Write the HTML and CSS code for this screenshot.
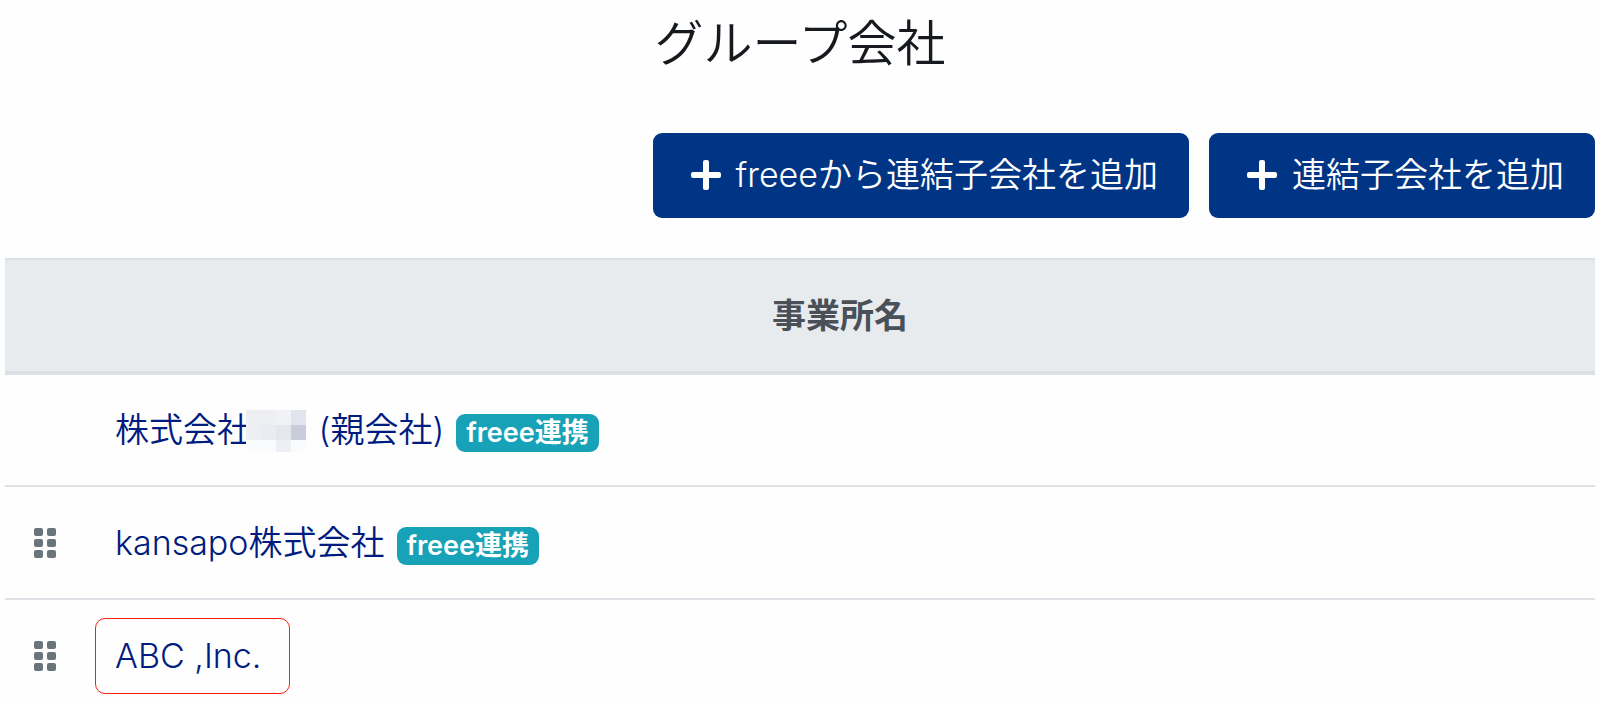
FILE: index.html
```html
<!DOCTYPE html>
<html lang="ja">
<head>
  <meta charset="UTF-8">
  <title>グループ会社</title>
  <link rel="stylesheet" href="styles.css">
</head>
<body>

  <h1>グループ会社</h1>

  <div class="actions">
    <button type="button" class="btn">
      <svg class="plus" viewBox="0 0 30 30" aria-hidden="true"><path d="M12 2a2 2 0 0 1 2-2h2a2 2 0 0 1 2 2v10h10a2 2 0 0 1 2 2v2a2 2 0 0 1-2 2H18v10a2 2 0 0 1-2 2h-2a2 2 0 0 1-2-2V18H2a2 2 0 0 1-2-2v-2a2 2 0 0 1 2-2h10z"/></svg>
      freeeから連結子会社を追加
    </button>
    <button type="button" class="btn">
      <svg class="plus" viewBox="0 0 30 30" aria-hidden="true"><path d="M12 2a2 2 0 0 1 2-2h2a2 2 0 0 1 2 2v10h10a2 2 0 0 1 2 2v2a2 2 0 0 1-2 2H18v10a2 2 0 0 1-2 2h-2a2 2 0 0 1-2-2V18H2a2 2 0 0 1-2-2v-2a2 2 0 0 1 2-2h10z"/></svg>
      連結子会社を追加
    </button>
  </div>

  <table class="companies">
    <thead>
      <tr>
        <th class="handle-col"></th>
        <th>事業所名</th>
      </tr>
    </thead>
    <tbody>
      <tr>
        <td class="handle-col"></td>
        <td>
          <div class="company">
            <a href="#">株式会社<svg class="mask" viewBox="0 0 60 42" aria-hidden="true">
              <path fill="#fff" d="M0 0h60v42H0z"/>
              <path fill="#eeeff3" d="M0 0h30v15H0zM0 15h15v15H0z"/>
              <path fill="#f1f2f5" d="M30 0h15v15H30z"/>
              <path fill="#e1e4ec" d="M45 0h15v15H45z"/>
              <path fill="#ebecf1" d="M15 15h15v15H15z"/>
              <path fill="#e6e7ed" d="M30 15h15v15H30z"/>
              <path fill="#c8ccdb" d="M45 15h15v15H45z"/>
              <path fill="#fafbfc" d="M0 30h30v12H0zM45 30h15v12H45z"/>
              <path fill="#eeeff4" d="M30 30h15v12H30z"/>
            </svg> (親会社)</a>
            <span class="badge">freee連携</span>
          </div>
        </td>
      </tr>
      <tr>
        <td class="handle-col">
          <svg class="handle" viewBox="0 0 22 30" aria-hidden="true"><g><rect width="9" height="8" rx="2"/><rect x="13" width="9" height="8" rx="2"/><rect y="11" width="9" height="8" rx="2"/><rect x="13" y="11" width="9" height="8" rx="2"/><rect y="22" width="9" height="8" rx="2"/><rect x="13" y="22" width="9" height="8" rx="2"/></g></svg>
        </td>
        <td>
          <div class="company">
            <a href="#">kansapo株式会社</a>
            <span class="badge">freee連携</span>
          </div>
        </td>
      </tr>
      <tr>
        <td class="handle-col">
          <svg class="handle" viewBox="0 0 22 30" aria-hidden="true"><g><rect width="9" height="8" rx="2"/><rect x="13" width="9" height="8" rx="2"/><rect y="11" width="9" height="8" rx="2"/><rect x="13" y="11" width="9" height="8" rx="2"/><rect y="22" width="9" height="8" rx="2"/><rect x="13" y="22" width="9" height="8" rx="2"/></g></svg>
        </td>
        <td>
          <div class="company">
            <a href="#" class="highlight">ABC ,Inc.</a>
          </div>
        </td>
      </tr>
    </tbody>
  </table>

</body>
</html>
```
FILE: styles.css
```css
* {
  box-sizing: border-box;
}
body {
  margin: 0;
  padding: 14px 5px 0;
  background: #fefefe;
  color: #212529;
  font-family: Inter, "Noto Sans CJK JP", sans-serif;
  font-size: 34px;
  font-weight: 350;
  line-height: 50px;
}
h1 {
  margin: 0 0 59px;
  color: #16191d;
  font-size: 49px;
  font-weight: 350;
  line-height: 60px;
  text-align: center;
}
.actions {
  display: flex;
  justify-content: flex-end;
  gap: 20px;
  margin-bottom: 40px;
}
.btn {
  display: flex;
  align-items: center;
  gap: 15px;
  padding: 17px 31px 18px 38px;
  border: 0;
  border-radius: 9px;
  background: #003585;
  color: #fff;
  font: inherit;
}
.plus {
  width: 30px;
  height: 30px;
  fill: #fff;
}
.companies {
  width: 100%;
  border-collapse: collapse;
  table-layout: fixed;
}
.companies th {
  height: 114px;
  padding: 0;
  border-top: 2px solid #dcdfe4;
  border-bottom: 4px solid #dcdfe4;
  background: #e8ebee;
  color: #495057;
  font-weight: 700;
}
.companies td {
  height: 113px;
  padding: 0 30px;
  border-top: 2px solid #dee2e6;
}
.companies .handle-col {
  width: 80px;
  padding: 0 29px;
}
.handle {
  display: block;
  width: 22px;
  height: 30px;
  fill: #6a747b;
}
.company {
  display: flex;
  align-items: center;
  gap: 12px;
}
.company a {
  color: #001c80;
  text-decoration: none;
}
.mask {
  width: 60px;
  height: 42px;
  margin: 0 3px 0 -5px;
  vertical-align: -10px;
}
.badge {
  margin-top: 6px;
  padding: 0 10px;
  border-radius: 9px;
  background: #17a2b8;
  color: #fff;
  font-size: 27px;
  font-weight: 600;
  line-height: 38px;
}
.company .highlight {
  margin-left: -20px;
  padding: 12px 28px 12px 19px;
  border: 1px solid #ff1a0d;
  border-radius: 10px;
}
```
